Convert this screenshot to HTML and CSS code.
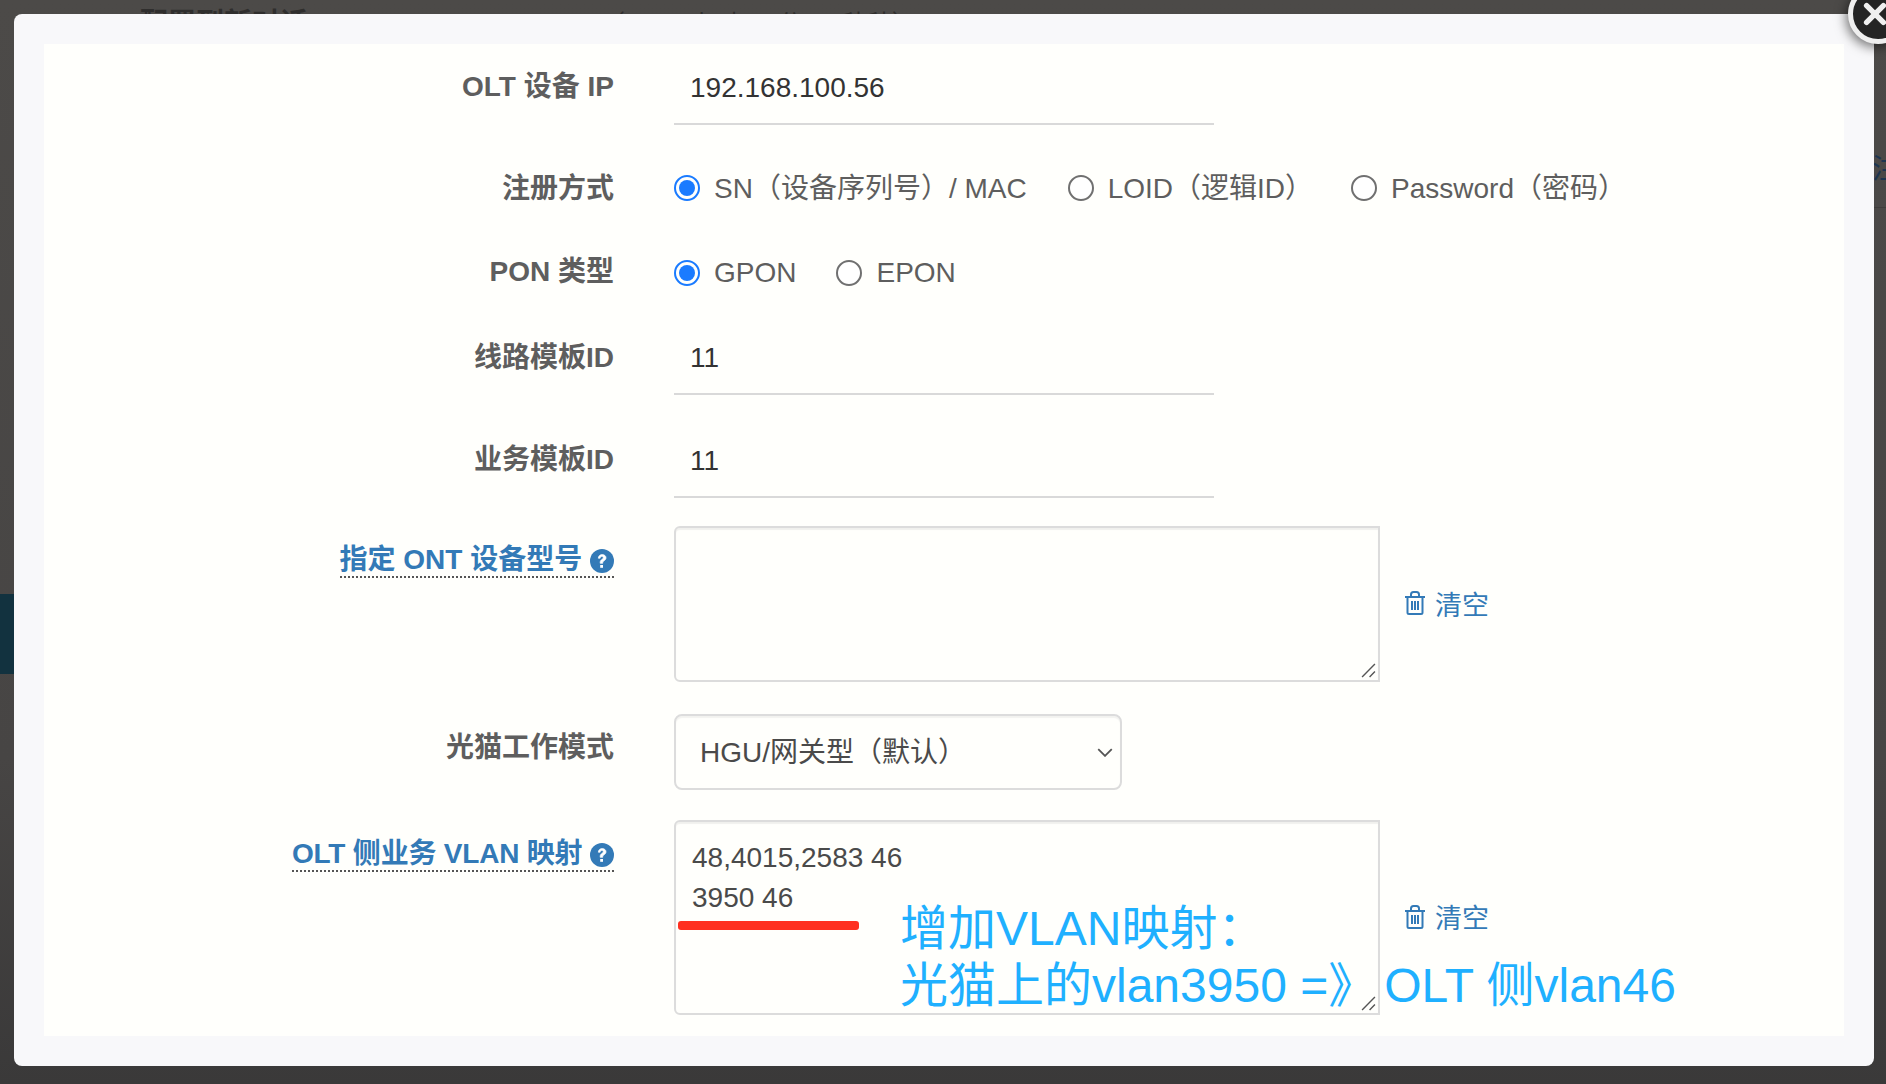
FILE: index.html
```html
<!DOCTYPE html>
<html lang="zh">
<head>
<meta charset="utf-8">
<title>OLT</title>
<link rel="stylesheet" href="styles.css">
</head>
<body>
<div class="backdrop">
  <div class="bg-text">配置到新对话<span class="bg-note">（一 ・ 小时 ・ 分 ・ 秒种）</span></div>
  <div class="bg-teal"></div>
  <div class="bg-side">注</div>
  <div class="bg-rule"></div>
</div>
<div class="modal">
  <form class="panel">
    <div class="row row-ip">
      <label class="lbl">OLT 设备 IP</label>
      <div class="line-input">192.168.100.56</div>
    </div>
    <div class="row row-reg">
      <label class="lbl">注册方式</label>
      <div class="radios">
        <span class="radio on"></span><span class="opt opt-sn">SN（设备序列号）/ MAC</span>
        <span class="radio"></span><span class="opt opt-loid">LOID（逻辑ID）</span>
        <span class="radio"></span><span class="opt">Password（密码）</span>
      </div>
    </div>
    <div class="row row-pon">
      <label class="lbl">PON 类型</label>
      <div class="radios">
        <span class="radio on"></span><span class="opt">GPON</span>
        <span class="radio"></span><span class="opt">EPON</span>
      </div>
    </div>
    <div class="row row-line">
      <label class="lbl">线路模板ID</label>
      <div class="line-input">11</div>
    </div>
    <div class="row row-svc">
      <label class="lbl">业务模板ID</label>
      <div class="line-input">11</div>
    </div>
    <div class="row row-ont">
      <label class="lbl lbl-help"><span class="help">指定 ONT 设备型号 <svg class="qm" viewBox="0 0 24 24"><circle cx="12" cy="12" r="12" fill="#337ab7"/><path d="M8.300 9.200c.2-2.300 1.800-3.600 3.900-3.600 2.200 0 3.800 1.300 3.800 3.200 0 1.500-.9 2.300-2 3-.9.6-1.300 1-1.300 2v.5h-2.500v-.8c0-1.500.6-2.300 1.700-3 .9-.6 1.400-1 1.400-1.700 0-.8-.6-1.300-1.500-1.300-1 0-1.600.6-1.700 1.700z" fill="#fff" stroke="#fff" stroke-width=".7"/><rect x="10.200" y="16" width="2.800" height="2.800" fill="#fff"/></svg></span></label>
      <div class="area area-ont"><svg class="grip" viewBox="0 0 14 14"><path d="M1 13 13 1M8 13l5-5" stroke="#555" stroke-width="1.300" fill="none"/></svg></div>
      <a class="clear"><svg class="trash" viewBox="0 0 22 24"><path d="M1 6h20M3.500 6v15.500a1.500 1.500 0 0 0 1.500 1.500h12a1.500 1.500 0 0 0 1.500-1.500V6M7 6V3.500C7 2 8 1 9.500 1h3C14 1 15 2 15 3.500V6M8 10v9M11 10v9M14 10v9" stroke="#337ab7" stroke-width="2" fill="none"/></svg>清空</a>
    </div>
    <div class="row row-mode">
      <label class="lbl">光猫工作模式</label>
      <div class="select">HGU/网关型（默认）<svg class="chev" viewBox="0 0 14 8"><path d="M1 1l6 6 6-6" stroke="#555" stroke-width="1.600" fill="none"/></svg></div>
    </div>
    <div class="row row-vlan">
      <label class="lbl lbl-help"><span class="help help-vlan">OLT 侧业务 VLAN 映射 <svg class="qm" viewBox="0 0 24 24"><circle cx="12" cy="12" r="12" fill="#337ab7"/><path d="M8.300 9.200c.2-2.300 1.800-3.600 3.900-3.600 2.200 0 3.800 1.300 3.800 3.200 0 1.500-.9 2.300-2 3-.9.6-1.300 1-1.300 2v.5h-2.500v-.8c0-1.500.6-2.300 1.700-3 .9-.6 1.400-1 1.400-1.700 0-.8-.6-1.300-1.500-1.300-1 0-1.600.6-1.700 1.700z" fill="#fff" stroke="#fff" stroke-width=".7"/><rect x="10.200" y="16" width="2.800" height="2.800" fill="#fff"/></svg></span></label>
      <div class="area area-vlan">48,4015,2583 46<br>3950 46<svg class="grip" viewBox="0 0 14 14"><path d="M1 13 13 1M8 13l5-5" stroke="#555" stroke-width="1.300" fill="none"/></svg></div>
      <a class="clear"><svg class="trash" viewBox="0 0 22 24"><path d="M1 6h20M3.500 6v15.500a1.500 1.500 0 0 0 1.500 1.500h12a1.500 1.500 0 0 0 1.500-1.500V6M7 6V3.500C7 2 8 1 9.500 1h3C14 1 15 2 15 3.500V6M8 10v9M11 10v9M14 10v9" stroke="#337ab7" stroke-width="2" fill="none"/></svg>清空</a>
    </div>
    <div class="red-mark"></div>
    <div class="note">增加VLAN映射：<br>光猫上的vlan3950 =》<span class="note-olt">OLT 侧vlan46</span></div>
  </form>
</div>
<div class="close"><svg viewBox="0 0 20 20"><path d="M3 3l14 14M17 3 3 17" stroke="#efefef" stroke-width="4.500" stroke-linecap="round" fill="none"/></svg></div>
</body>
</html>
```
FILE: styles.css
```css
* { box-sizing: border-box; }
html, body { margin: 0; height: 100%; overflow: hidden; }
body {
  position: relative;
  width: 1886px;
  height: 1084px;
  background: #4a4846;
  font-family: "Liberation Sans", "Noto Sans CJK SC", sans-serif;
  color: #5e5e5e;
}
.backdrop { position: absolute; inset: 0; background: linear-gradient(#4c4a48, #474544 70%, #3a3939); }
.bg-text { position: absolute; left: 140px; top: 1px; font-size: 28px; font-weight: bold; color: #2f2e2d; white-space: nowrap; }
.bg-note { margin-left: 292px; font-size: 25px; font-weight: normal; }
.bg-teal { position: absolute; left: 0; top: 594px; width: 14px; height: 80px; background: #12323f; }
.bg-side { position: absolute; right: -14px; top: 147px; font-size: 28px; color: #1d3550; }
.bg-rule { position: absolute; right: 0; top: 207px; width: 12px; height: 1px; background: #3f3d3c; }
.modal {
  position: absolute;
  left: 14px;
  top: 14px;
  width: 1860px;
  height: 1052px;
  padding: 30px;
  background: #f8f8fa;
  border-radius: 8px;
}
.panel {
  position: relative;
  height: 992px;
  background: #fffffc;
  display: flex;
  flex-direction: column;
}
.row { display: flex; align-items: flex-start; }
.lbl {
  flex: none;
  width: 570px;
  margin-right: 60px;
  text-align: right;
  font-size: 28px;
  line-height: 40px;
  font-weight: bold;
  color: #5e5e5e;
}
.lbl-help { display: flex; justify-content: flex-end; padding-top: 18px; }
.row-ip { padding-top: 23px; height: 100px; }
.row-reg { height: 84px; padding-top: 25px; }
.row-reg .radios { margin-top: -1px; }
.row-reg .opt { margin-bottom: 4px; }
.row-pon { height: 84px; padding-top: 24px; }
.row-pon .radios { margin-top: 1px; }
.row-line { height: 102px; padding-top: 26px; }
.row-svc { height: 112px; padding-top: 26px; }
.row-ont { height: 188px; padding-bottom: 32px; }
.row-mode { height: 106px; }
.row-mode .lbl { padding-top: 14px; }
.row-vlan { height: 195px; }
.line-input {
  width: 540px;
  height: 60px;
  padding: 0 16px;
  margin-top: -2px;
  border-bottom: 2px solid #d9d9d9;
  font-size: 28px;
  line-height: 46px;
  color: #333;
}
.row-line .line-input { margin-top: -3px; }
.radios { display: flex; align-items: center; height: 40px; font-size: 28px; color: #5e5e5e; }
.radio {
  flex: none;
  width: 26px;
  height: 26px;
  border: 2px solid #707070;
  border-radius: 50%;
  background: #fff;
  margin-right: 14px;
}
.radio.on { border-color: #1a7bff; padding: 3px; background: #1a7bff content-box; }
.opt { white-space: nowrap; margin-right: 40px; }
.opt-sn { margin-right: 41px; }
.opt-loid { margin-right: 38px; }
.help {
  border-bottom: 2px dotted #555;
  color: #337ab7;
  line-height: 32px;
}
.help-vlan { letter-spacing: -.2px; }
.qm { width: 24px; height: 24px; vertical-align: -4px; }
.area {
  position: relative;
  width: 706px;
  border: 2px solid #dcdcdc;
  border-radius: 6px 0 0 6px;
  background: #fffffc;
  box-shadow: inset 0 2px 1px rgba(0,0,0,.06);
  font-size: 28px;
  color: #4a4a4a;
}
.area-ont { height: 156px; }
.area-vlan { height: 195px; padding: 16px; line-height: 40px; }
.grip { position: absolute; right: 2px; bottom: 2px; width: 15px; height: 15px; }
.clear {
  display: flex;
  align-items: center;
  align-self: center;
  gap: 9px;
  margin-left: 24px;
  margin-bottom: 2px;
  font-size: 27px;
  color: #337ab7;
}
.trash { width: 22px; height: 24px; }
.select {
  position: relative;
  width: 448px;
  height: 76px;
  padding: 0 24px;
  border: 2px solid #dcdcdc;
  border-radius: 8px;
  box-shadow: inset 0 2px 1px rgba(0,0,0,.05);
  font-size: 28px;
  line-height: 74px;
  color: #4a4a4a;
}
.chev { position: absolute; right: 7px; top: 32px; width: 16px; height: 9px; }
.red-mark { position: absolute; left: 634px; top: 877px; width: 181px; height: 9px; border-radius: 3px; background: #ff3020; }
.note {
  position: absolute;
  left: 856px;
  top: 856px;
  font-size: 48px;
  line-height: 57px;
  color: #1fb0ff;
  white-space: nowrap;
}
.note-olt { margin-left: 8px; }
.close {
  position: absolute;
  left: 1848px;
  top: -16px;
  width: 60px;
  height: 60px;
  padding-right: 6px;
  display: flex;
  align-items: center;
  justify-content: center;
  border: 5px solid #efefef;
  border-radius: 50%;
  background: #242424;
  box-shadow: -2px 3px 12px rgba(0,0,0,.55);
}
.close svg { display: block; width: 24px; height: 24px; }
```
